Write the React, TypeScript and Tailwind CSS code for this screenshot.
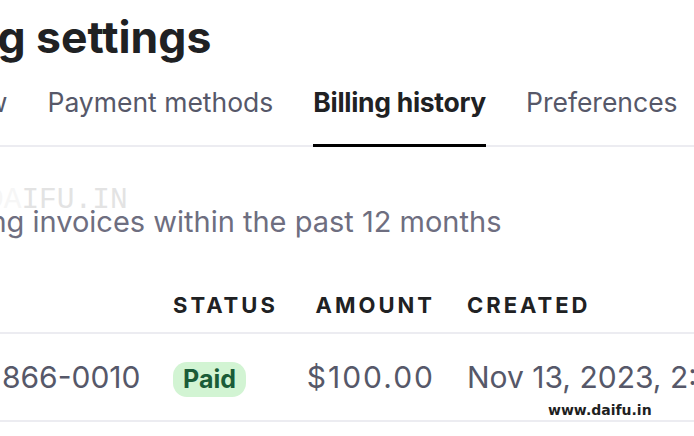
import React from "react";

const sans = { fontFamily: "Inter, 'Noto Sans', sans-serif" };

export default function App() {
  return (
    <div
      className="relative w-[694px] h-[436px] overflow-hidden bg-white"
      style={sans}
    >
      <div className="pt-[13px]">
        <h1 className="-ml-[108px] whitespace-nowrap text-[44.5px] leading-[48px] font-bold text-[#202123]">
          Billing settings
        </h1>

        <div className="mt-[25px] border-b-2 border-[#ececf1]">
          <div className="-ml-[111px] flex gap-[40px] whitespace-nowrap text-[26.5px] leading-[32px]">
            <div className="pb-[26px] border-b-[3px] border-transparent -mb-[2px] text-[#565869]">Overview</div>
            <div className="pb-[26px] border-b-[3px] border-transparent -mb-[2px] text-[#565869]">Payment methods</div>
            <div className="pb-[26px] border-b-[3px] border-black -mb-[2px] font-bold text-[#202123] tracking-[-0.3px]">Billing history</div>
            <div className="pb-[26px] border-b-[3px] border-transparent -mb-[2px] text-[#565869]">Preferences</div>
          </div>
        </div>

        <div className="relative mt-[57px]">
          <div
            className="absolute -left-[14px] -top-[19px] text-[29.5px] leading-[30px] text-[#e3e3e3] whitespace-nowrap"
            style={{ fontFamily: "'Liberation Mono', monospace" }}
          >
            <span className="text-[#f6f6f6]">DA</span>IFU.IN
          </div>
          <p className="relative -ml-[94px] whitespace-nowrap text-[29px] leading-[36px] text-[#6e6e80]">
            Showing invoices within the past 12 months
          </p>
        </div>

        <div className="mt-[48px]">
          <div className="grid grid-cols-[173px_120px_142px_1fr] items-center h-[34px] border-b-2 border-[#ececf1] pb-[10px] box-content text-[22px] font-bold tracking-[3px] text-[#202123] whitespace-nowrap">
            <div></div>
            <div>STATUS</div>
            <div className="text-right">AMOUNT</div>
            <div className="pl-[32px]">CREATED</div>
          </div>
          <div className="grid grid-cols-[173px_120px_142px_1fr] items-center h-[88px] border-b-2 border-[#ececf1] text-[30px] text-[#565869] whitespace-nowrap">
            <div className="-ml-[86px]">9E4A1866-0010</div>
            <div>
              <span className="inline-flex items-center h-[35px] px-[10px] rounded-[14px] bg-[#d2f4d3] text-[#1a5c38] text-[25px] font-bold">
                Paid
              </span>
            </div>
            <div className="text-right tracking-[2px]">$100.00</div>
            <div className="pl-[32px]">Nov 13, 2023, 2:14 PM</div>
          </div>
        </div>
      </div>

      <div
        className="absolute left-[548px] top-[400px] text-[14px] font-bold text-[#1f1f1f]"
        style={{ fontFamily: "'DejaVu Sans', sans-serif" }}
      >
        www.daifu.in
      </div>
    </div>
  );
}
